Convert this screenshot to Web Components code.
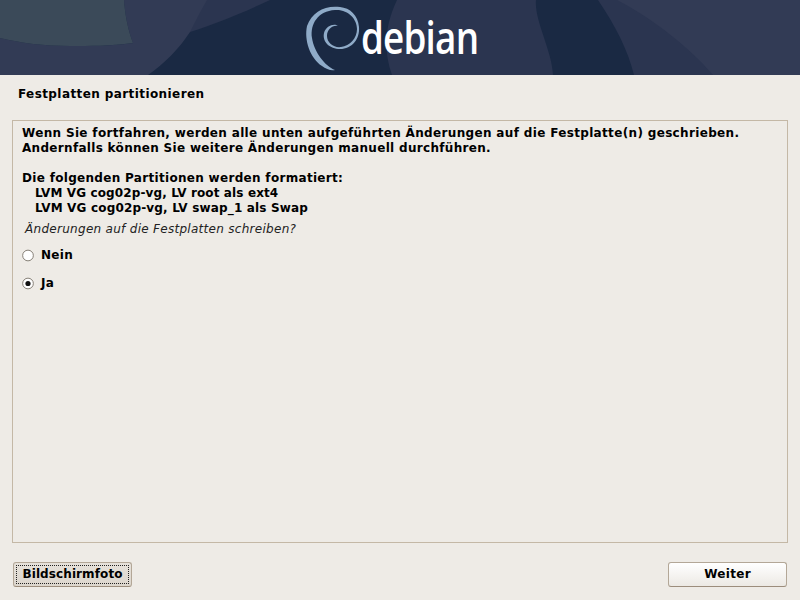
<!DOCTYPE html>
<html lang="de">
<head>
<meta charset="utf-8">
<title>Festplatten partitionieren</title>
<style>
  html, body { margin: 0; height: 100%; }
  body {
    width: 800px;
    height: 600px;
    overflow: hidden;
    background: #eeebe6;
    color: #000;
    font: bold 12px/15px "DejaVu Sans", sans-serif;
    letter-spacing: .31px;
    display: flex;
    flex-direction: column;
  }
</style>
</head>
<body>
<di-banner></di-banner>
<di-title>Festplatten partitionieren</di-title>
<di-frame>
  <di-line style="letter-spacing:.34px">Wenn Sie fortfahren, werden alle unten aufgeführten Änderungen auf die Festplatte(n) geschrieben.</di-line>
  <di-line>Andernfalls können Sie weitere Änderungen manuell durchführen.</di-line>
  <di-line></di-line>
  <di-line>Die folgenden Partitionen werden formatiert:</di-line>
  <di-line style="letter-spacing:.12px">   LVM VG cog02p-vg, LV root als ext4</di-line>
  <di-line style="letter-spacing:.17px">   LVM VG cog02p-vg, LV swap_1 als Swap</di-line>
  <di-question>Änderungen auf die Festplatten schreiben?</di-question>
  <di-radio>Nein</di-radio>
  <di-radio checked>Ja</di-radio>
</di-frame>
<di-actions>
  <di-button focused style="letter-spacing:.1px">Bildschirmfoto</di-button>
  <di-button>Weiter</di-button>
</di-actions>

<script>
// Kopfbereich mit Logo
class DiBanner extends HTMLElement {
  constructor() {
    super();
    this.attachShadow({ mode: 'open' });
    this.shadowRoot.innerHTML = `
      <style>
        :host { display: block; height: 75px; position: relative; overflow: hidden; background: #1a2943; flex: none; }
        svg { display: block; }
        .word {
          position: absolute; left: 361px; top: 8px;
          font: 600 46px/56px "Open Sans", sans-serif;
          letter-spacing: -1px;
          color: #fff;
          transform-origin: 0 0;
          transform: scaleX(0.8);
        }
      </style>
      <svg width="800" height="75" viewBox="0 0 800 75">
        <path fill="#2b3550" d="M397 0C385 25 383 50 392 75H553C552 50 534 20 536 0Z"/>
        <path fill="#2b3550" d="M598 0C615 25 628 50 634 75H800V0Z"/>
        <path fill="#323b55" d="M617 0C655 20 690 48 713 75H800V0Z"/>
        <path fill="#2b3550" d="M124 0H270C240 14 215 24 190 32L133 43Z"/>
        <path fill="#323b55" d="M124 0H207C200 12 195 22 190 32C178 50 165 63 148 75H0V38C20 43 45 46 70 46C90 46 112 46 133 43C128 30 125 15 124 0Z"/>
        <path fill="#3b4a59" d="M0 0H124C125 15 128 30 133 43C110 46 90 46 70 46C45 46 20 43 0 38Z"/>
        <path fill="#8fabc8" d="M340 7C325 5 312 12 307 26C304 40 310 58 322 66C326 69 331 71 335 70C325 66 314 52 312 38C310 24 318 11 335 10C348 9 357 19 357 29C357 38 350 46 341 47C334 48 327 43 327 36C327 30 332 25 338 26C335 23 326 25 324 33C322 42 330 49 340 49C352 49 360 39 359 27C358 15 350 8 340 7Z"/>
      </svg>
      <span class="word">debian</span>
    `;
  }
}

class DiTitle extends HTMLElement {
  constructor() {
    super();
    this.attachShadow({ mode: 'open' });
    this.shadowRoot.innerHTML = `
      <style>
        :host { display: block; height: 45px; box-sizing: border-box; padding: 12px 18px 0; flex: none; letter-spacing: .41px; }
      </style>
      <slot></slot>
    `;
  }
}

class DiFrame extends HTMLElement {
  constructor() {
    super();
    this.attachShadow({ mode: 'open' });
    this.shadowRoot.innerHTML = `
      <style>
        :host {
          display: flex; flex-direction: column;
          height: 423px; box-sizing: border-box;
          margin: 0 12px; padding: 5px 9px;
          border: 1px solid #c4b8a6;
          flex: none;
        }
      </style>
      <slot></slot>
    `;
  }
}

class DiLine extends HTMLElement {
  constructor() {
    super();
    this.attachShadow({ mode: 'open' });
    this.shadowRoot.innerHTML = `
      <style>
        :host { display: block; height: 15px; }
        slot { white-space: pre; }
      </style>
      <slot></slot>
    `;
  }
}

class DiQuestion extends HTMLElement {
  constructor() {
    super();
    this.attachShadow({ mode: 'open' });
    this.shadowRoot.innerHTML = `
      <style>
        :host { display: block; font-weight: normal; font-style: italic; margin: 6px 0 4px; padding-left: 3px; color: #222; letter-spacing: .29px; }
      </style>
      <slot></slot>
    `;
  }
}

class DiRadio extends HTMLElement {
  constructor() {
    super();
    this.attachShadow({ mode: 'open' });
    const dot = this.hasAttribute('checked') ? '<circle cx="6.5" cy="6.5" r="2.8" fill="#111"/>' : '';
    this.shadowRoot.innerHTML = `
      <style>
        :host { display: flex; align-items: center; gap: 7px; height: 28px; }
        svg { flex: none; }
      </style>
      <svg width="12" height="13" viewBox="0 0 13 13">
        <circle cx="6.5" cy="6.5" r="5.8" fill="#fff" stroke="#7d766c" stroke-width="1"/>
        ${dot}
      </svg>
      <slot></slot>
    `;
  }
}

class DiActions extends HTMLElement {
  constructor() {
    super();
    this.attachShadow({ mode: 'open' });
    this.shadowRoot.innerHTML = `
      <style>
        :host { display: flex; justify-content: space-between; padding: 19px 13px 0; flex: none; }
      </style>
      <slot></slot>
    `;
  }
}

class DiButton extends HTMLElement {
  constructor() {
    super();
    this.attachShadow({ mode: 'open' });
    const focused = this.hasAttribute('focused');
    this.shadowRoot.innerHTML = `
      <style>
        :host {
          display: block; width: 119px; height: 25px; box-sizing: border-box;
          border: 1px solid #b3a797; border-bottom-color: #9c8d7c; border-radius: 3px;
          background: ${focused ? 'linear-gradient(#e6e1da, #dcd6cd)' : 'linear-gradient(#fff, #ece9e4)'};
          padding: 2px;
        }
        .in {
          height: 100%; box-sizing: border-box;
          display: flex; align-items: center; justify-content: center;
          border: 1px dotted ${focused ? '#222' : 'transparent'};
        }
      </style>
      <div class="in"><slot></slot></div>
    `;
  }
}

customElements.define('di-banner', DiBanner);
customElements.define('di-title', DiTitle);
customElements.define('di-frame', DiFrame);
customElements.define('di-line', DiLine);
customElements.define('di-question', DiQuestion);
customElements.define('di-radio', DiRadio);
customElements.define('di-actions', DiActions);
customElements.define('di-button', DiButton);
</script>
</body>
</html>
